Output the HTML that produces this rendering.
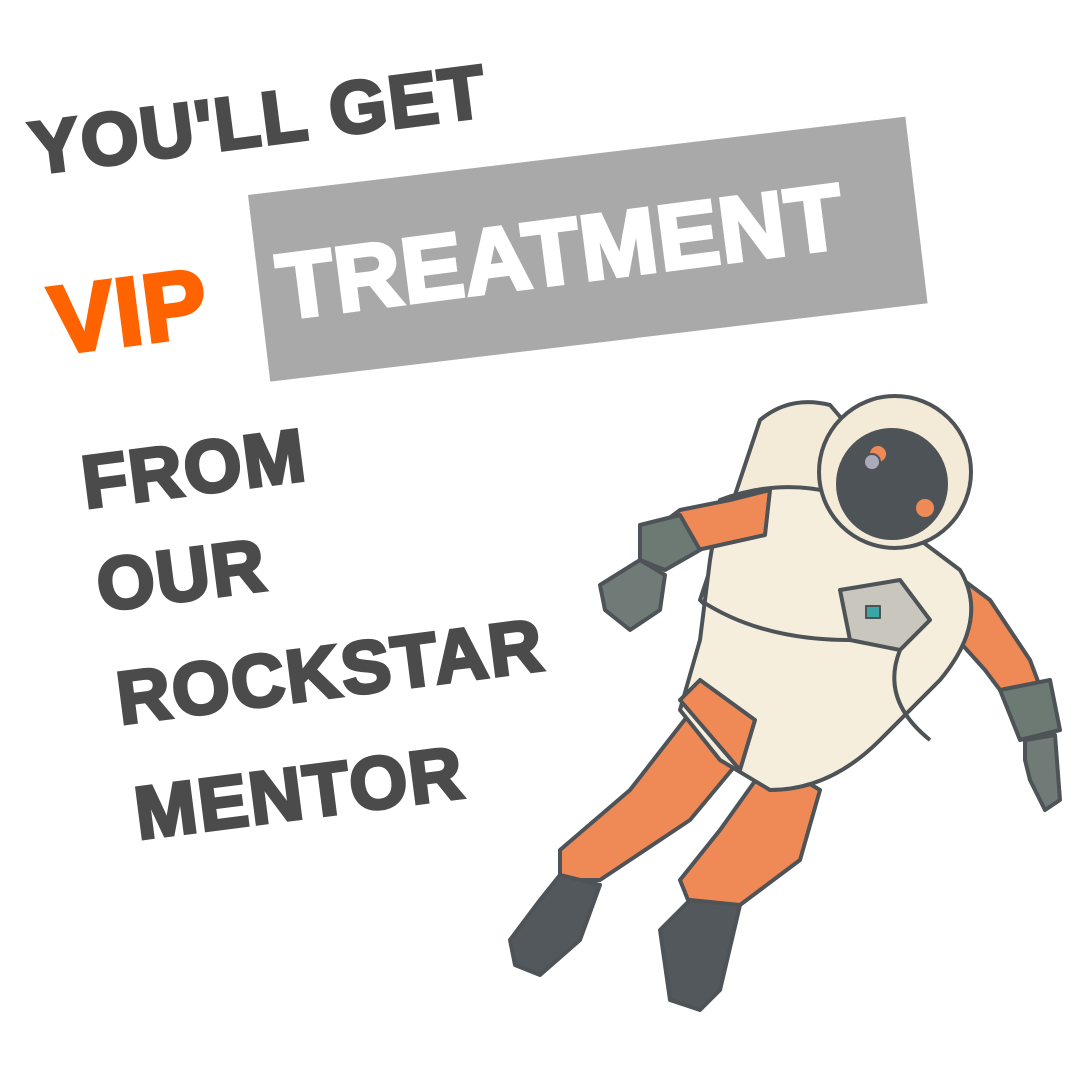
<!DOCTYPE html>
<html><head><meta charset="utf-8"><style>
html,body{margin:0;padding:0;background:#fff;width:1080px;height:1080px;overflow:hidden;position:relative}
.t{position:absolute;font-family:"Liberation Sans",sans-serif;font-weight:bold;white-space:nowrap;transform-origin:0 100%;transform:rotate(-7.3deg);line-height:1;color:#4b4b4b;-webkit-text-stroke:3.5px #4b4b4b;letter-spacing:2px}
</style></head><body>
<div class="t" style="left:35px;top:112px;font-size:74px;">YOU'LL GET</div>
<div style="position:absolute;left:248px;top:195px;width:662px;height:188px;background:#a9a9a9;transform-origin:0 0;transform:rotate(-6.8deg)"></div>
<div class="t" style="left:57px;top:274px;font-size:96px;color:#ff6300;-webkit-text-stroke:4px #ff6300;letter-spacing:1px">VIP</div>
<div class="t" style="left:284px;top:242px;font-size:92px;color:#fff;-webkit-text-stroke:4px #fff;letter-spacing:1px">TREATMENT</div>
<div class="t" style="left:87px;top:446px;font-size:74px;">FROM</div>
<div class="t" style="left:102px;top:549px;font-size:74px;">OUR</div>
<div class="t" style="left:122px;top:662px;font-size:74px;">ROCKSTAR</div>
<div class="t" style="left:140px;top:777px;font-size:74px;">MENTOR</div>
<svg width="1080" height="1080" style="position:absolute;left:0;top:0" viewBox="0 0 1080 1080">
<g stroke="#4e5357" stroke-width="4" stroke-linejoin="round">
<path d="M700 600 L760 420 Q790 395 830 405 L860 440 L820 560 L740 640 Z" fill="#f3ead8"/>
<path d="M950 570 L990 600 L1030 660 L1045 700 L1015 710 L985 670 L940 620 Z" fill="#ef8a56"/>
<path d="M1000 690 L1050 680 L1060 730 L1020 740 Z" fill="#6d7a74"/>
<path d="M1025 740 L1055 735 L1060 800 L1045 810 L1030 780 L1025 760 Z" fill="#707a76"/>
<path d="M700 700 L740 760 L690 820 L600 880 L560 880 L560 850 L630 790 Z" fill="#ef8a56"/>
<path d="M560 875 L600 885 L580 940 L540 975 L515 965 L510 940 L540 900 Z" fill="#52585c"/>
<path d="M770 760 L820 790 L800 860 L740 905 L690 905 L680 880 L720 830 Z" fill="#ef8a56"/>
<path d="M690 900 L740 905 L720 990 L700 1010 L670 1000 L660 930 Z" fill="#52585c"/>
<path d="M720 500 Q800 470 880 510 L960 570 Q990 620 940 680 L880 740 Q830 790 770 790 L720 760 L680 710 L700 640 L710 560 Z" fill="#f5eedd"/>
<path d="M680 700 L700 680 L755 720 L740 770 Z" fill="#ef8a56"/>
<path d="M770 490 L730 500 L680 510 L660 525 L675 555 L720 545 L765 535 Z" fill="#ef8a56"/>
<path d="M640 525 L680 515 L700 550 L665 570 L640 560 Z" fill="#6d7a74"/>
<path d="M640 560 L665 575 L660 610 L630 630 L605 610 L600 585 Z" fill="#707a76"/>
<path d="M840 590 L900 580 L930 620 L900 650 L850 640 Z" fill="#c9c7bd"/>
<rect x="866" y="606" width="14" height="12" fill="#3aa6a6" stroke-width="2"/>
<path d="M700 600 Q760 640 850 640" fill="none"/>
<path d="M900 650 Q880 700 930 740" fill="none"/>
<circle cx="895" cy="472" r="76" fill="#f3ead8"/>
<circle cx="892" cy="484" r="54" fill="#4e5357"/>
<circle cx="878" cy="454" r="8" fill="#ef8a56" stroke="none"/>
<circle cx="925" cy="508" r="9" fill="#ef8a56" stroke="none"/>
<circle cx="872" cy="462" r="8" fill="#aab" stroke-width="2"/>
</g>
</svg>
</body></html>
